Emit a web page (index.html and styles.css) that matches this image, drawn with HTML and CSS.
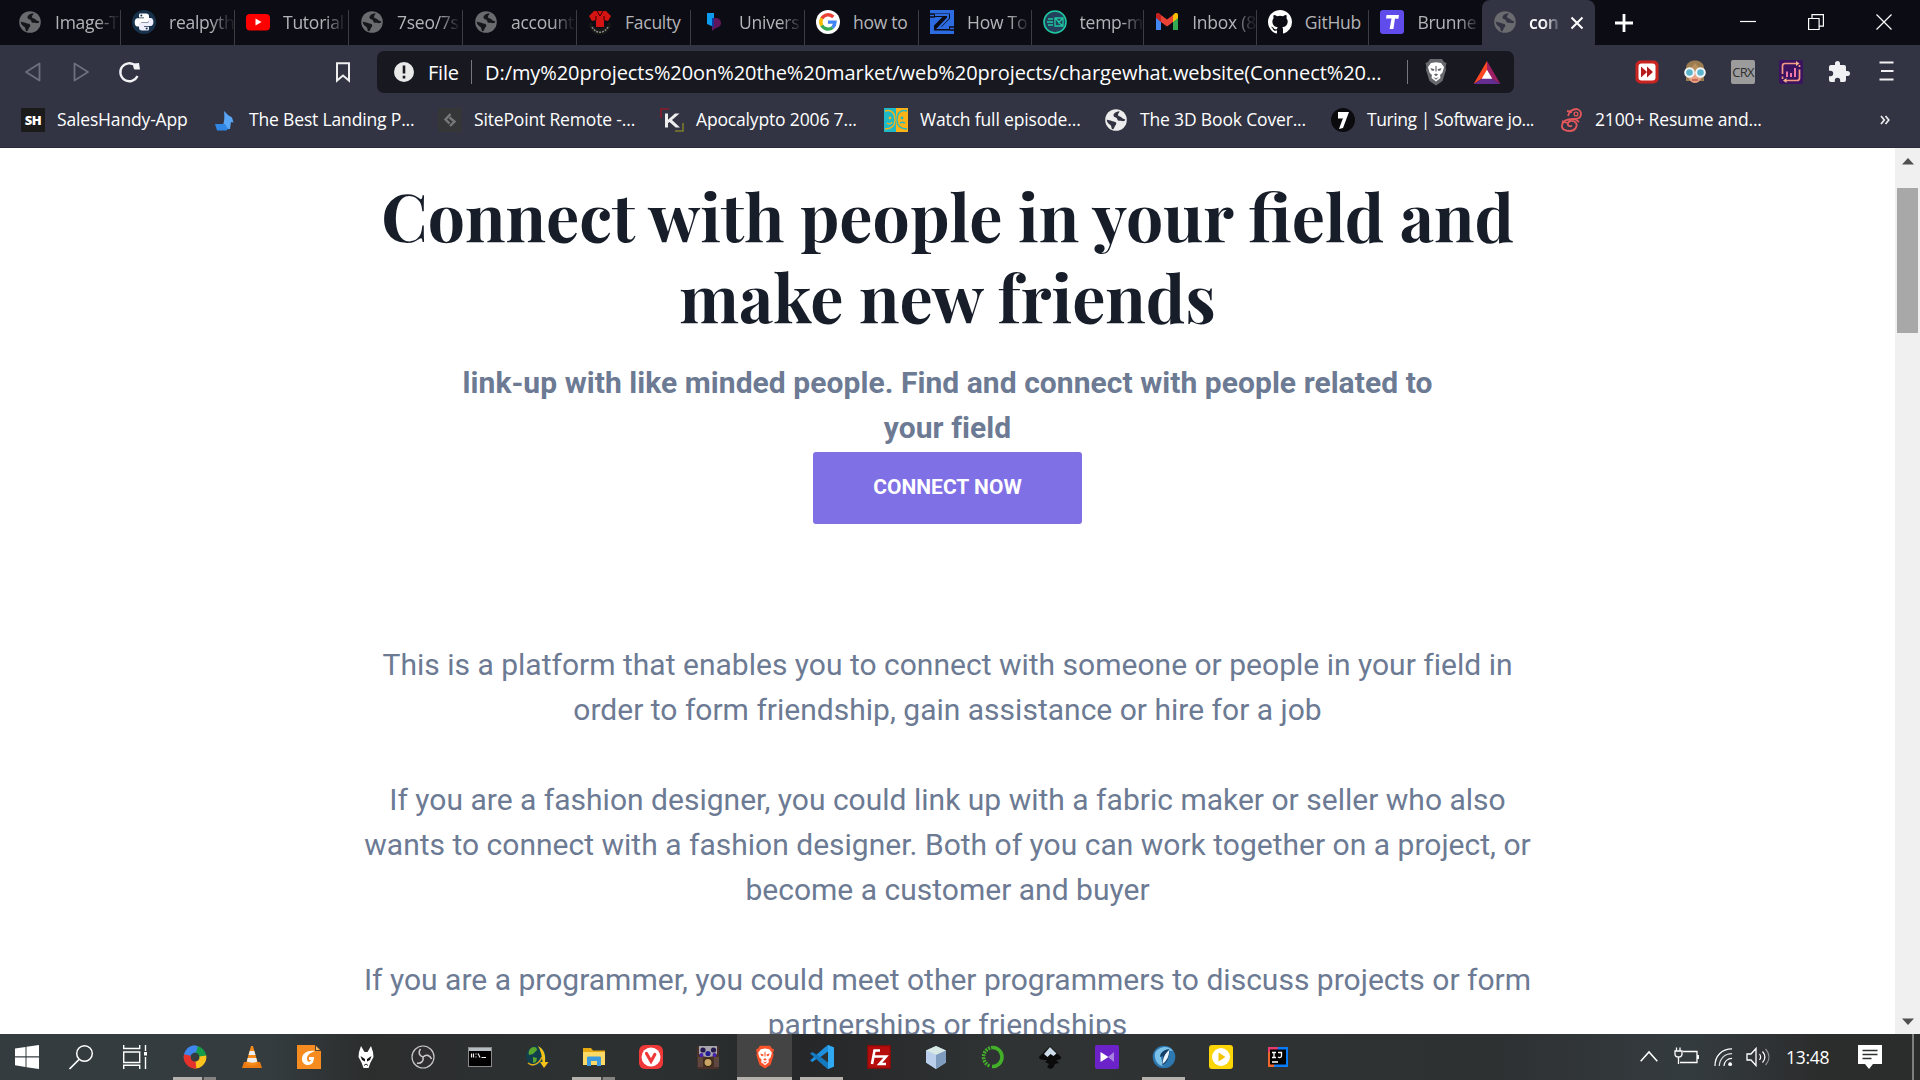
FILE: index.html
```html
<!DOCTYPE html>
<html lang="en">
<head>
<meta charset="utf-8">
<title>connect</title>
<link rel="stylesheet" href="styles.css">
</head>
<body>
<svg class="defs" aria-hidden="true">
  <symbol id="globe" viewBox="0 0 24 24"><circle cx="12" cy="12" r="10.800" fill="currentColor"/><path d="M15.500 3.200c-2 .3-4.500 1-5.500 2.500-1 1.300-.5 3 1 3.500 1.500.5 2 .8 2.300 2 .3 1.300 1.500 1.800 3 1.500 1.500-.2 2.200.8 3.700.3.700-.2 1.200-.8 1.300-1.500l-2-.8c-1.300-.5-2-2-3.300-2.300-1-.2-2-.5-2-1.700 0-1.300 1.500-2 1.500-3.500z" fill="var(--hole)"/><path d="M2.800 11.500c1.500 1 3.500.8 5 1.500s2 .3 3.500 1c1.200.6 1.300 2 .4 3.100-1 1-1 2.400-2.200 3.900-.6.5-1.500.2-1.800-.5-.5-1.200-.2-2.200-1-3.200-1.500-1.300-3.800-2.300-3.900-5.800z" fill="var(--hole)"/></symbol>
  <symbol id="lion" viewBox="0 0 24 28"><path d="M6 1h12l2 3 2.500 1-1 4 .5 3-3.500 11L12 27.500 5.500 23 2 12l.5-3-1-4L4 4z"/><path d="M7 5l5-.8L17 5l3 4-1.500 5.500L16 17l.5 3-4.500 3.500L7.500 20l.5-3-2.500-2.500L4 9z" fill="#fff"/><path d="M6.500 10l4 1.200-1 1.800-2-.6zM17.500 10l-4 1.200 1 1.800 2-.6zM9.800 16.500L12 15.600l2.200.9-2.200 1.800zM11.400 8h1.200v5.500h-1.200zM9 19l3 1.200L15 19l-3 2.800z"/></symbol>
</svg>

<header class="browser">
  <div class="tabstrip">
    <div class="tabs">
      <div class="tab"><svg class="ico dim"><use href="#globe"/></svg><span>Image-T</span></div>
      <div class="tab"><svg class="ico" viewBox="0 0 24 24"><circle cx="12" cy="12" r="12" fill="#17324a"/><path d="M8 3.500h6c2 0 3 1 3 2.700V10c0 1.600-1 2.600-2.600 2.600H10c-1.500 0-2.500 1-2.500 2.500v1.500H5.500c-2 0-2.800-2-2.800-4.300S3.600 8.300 5.500 8.300H12V7.500H7V5.200c0-1 .3-1.500 1-1.700z" fill="#fff"/><path d="M16 20.500h-6c-2 0-3-1-3-2.700V15c0-1.600 1-2 2.600-2h4.600c1.700 0 2.800-1 2.800-2.600V8h1.600c2 0 2.800 2 2.800 4s-.9 4-2.800 4H12v.8h5v2c0 1-.3 1.500-1 1.700z" fill="#eef"/><circle cx="9.300" cy="5.500" r="1" fill="#17324a"/><circle cx="14.700" cy="18.500" r="1" fill="#17324a"/></svg><span>realpyth</span></div>
      <div class="tab"><svg class="ico" viewBox="0 0 24 24"><rect y="4" width="24" height="16.500" rx="4" fill="#f00"/><path d="M9.500 8.500v7l6-3.500z" fill="#fff"/></svg><span>Tutorial</span></div>
      <div class="tab"><svg class="ico dim"><use href="#globe"/></svg><span>7seo/7s</span></div>
      <div class="tab"><svg class="ico dim"><use href="#globe"/></svg><span>account</span></div>
      <div class="tab fit"><svg class="ico" viewBox="0 0 24 24"><path d="M3 12a9.500 9.500 0 0 0 18 0l2 2a11 11 0 0 1-22 0z" fill="#181818"/><path d="M4 17c4 7 12 7 16 0" fill="none" stroke="#888" stroke-width="1.500" stroke-dasharray="2 1"/><path d="M1 6l5-5h12l5 5-3 5-4-1v7H8v-7l-4 1z" fill="#d31412"/><path d="M9 1l3 5 3-5M8 10V6m8 4V6" fill="none" stroke="#300" stroke-width="1"/></svg><span>Faculty</span></div>
      <div class="tab"><svg class="ico" viewBox="0 0 24 24"><path d="M5 3h7v14L5 14z" fill="#0d9bef"/><path d="M12 8h2a5 5 0 0 1 0 10l-4 3V9z" fill="#60155b"/><path d="M10 8h2v10l-2-2z" fill="#123a9a"/></svg><span>Univers</span></div>
      <div class="tab fit"><svg class="ico" viewBox="0 0 24 24"><circle cx="12" cy="12" r="12" fill="#fff"/><g fill="none" stroke-width="3.400"><path d="M17.300 7A7.200 7.200 0 0 0 5.800 8.500" stroke="#ea4335"/><path d="M5.800 8.400a7.200 7.200 0 0 0 0 7.200" stroke="#fbbc05"/><path d="M5.800 15.500a7.200 7.200 0 0 0 10.800 2" stroke="#34a853"/><path d="M16.500 17.500a7.200 7.200 0 0 0 2.500-5.400H12" stroke="#4285f4"/></g></svg><span>how to</span></div>
      <div class="tab"><svg class="ico" viewBox="0 0 24 24"><rect width="24" height="24" fill="#2d6be0"/><path d="M0 4h4M0 7h5M20 20h4M19 17h5" stroke="#0c0c14" stroke-width="1.500"/><path d="M4 3.500h16v5L11.500 17H20v3.500H4v-5L12.500 7H4z" fill="#0c0c14"/><path d="M5 5h13v3l-9.500 10H19" fill="none" stroke="#2d6be0" stroke-width="2"/></svg><span>How To</span></div>
      <div class="tab"><svg class="ico" viewBox="0 0 24 24"><circle cx="12" cy="12" r="11" fill="#23415c" stroke="#1fc8a0" stroke-width="1.600"/><path d="M5 9h5M4 12h6M5 15h5M12 8v8h8V8zm0 0l4 4 4-4m-5 4l5 4" fill="none" stroke="#1fc8a0" stroke-width="1.300"/></svg><span>temp-m</span></div>
      <div class="tab"><svg class="ico" viewBox="0 0 24 24"><path d="M1 6v14h5V9z" fill="#4285f4"/><path d="M18 9v11h5V6z" fill="#34a853"/><path d="M18 5v7l5-4V5c0-2-2-2.500-3.500-1.500z" fill="#fbbc04"/><path d="M1 5v3l5 4V5L4.500 3.500C3 2.500 1 3 1 5z" fill="#c5221f"/><path d="M6 5v7l6 4.500 6-4.500V5l-6 4.500z" fill="#ea4335"/></svg><span>Inbox (8</span></div>
      <div class="tab fit"><svg class="ico" viewBox="0 0 16 16"><path fill="#fff" d="M8 0C3.580 0 0 3.580 0 8c0 3.540 2.290 6.530 5.470 7.590.4.070.55-.17.55-.38 0-.19-.01-.82-.01-1.490-2.010.37-2.530-.49-2.690-.94-.09-.23-.48-.94-.82-1.130-.28-.15-.68-.52-.01-.53.630-.01 1.080.58 1.230.82.720 1.210 1.870.87 2.330.66.070-.52.280-.87.510-1.070-1.780-.2-3.640-.89-3.640-3.950 0-.87.310-1.590.82-2.150-.08-.2-.36-1.020.08-2.120 0 0 .67-.21 2.200.82a7.500 7.500 0 0 1 4 0c1.530-1.040 2.200-.82 2.200-.82.44 1.100.16 1.920.08 2.120.51.560.82 1.270.82 2.150 0 3.070-1.870 3.750-3.650 3.950.29.250.54.730.54 1.480 0 1.070-.01 1.930-.01 2.200 0 .21.150.46.550.38A8.010 8.010 0 0 0 16 8c0-4.420-3.580-8-8-8z"/></svg><span>GitHub</span></div>
      <div class="tab last"><svg class="ico" viewBox="0 0 24 24"><rect width="24" height="24" rx="3" fill="#5f4cea"/><path d="M6.500 5H19l-.7 4-3.300-.6L13.400 19H9.600l1.900-10.500H6z" fill="#fff"/></svg><span>Brunne</span></div>
      <div class="tab active"><svg class="ico dim"><use href="#globe"/></svg><span>con</span><svg class="x" viewBox="0 0 14 14"><path d="M1.500 1.500l11 11m0-11l-11 11" stroke="#fff" stroke-width="2"/></svg></div>
    </div>
    <svg class="plus" viewBox="0 0 18 18"><path d="M9 0v18M0 9h18" stroke="#fff" stroke-width="2.800"/></svg>
    <div class="winctl">
      <svg viewBox="0 0 16 16"><path d="M0 7.500h16" stroke="#fff" stroke-width="1.200"/></svg>
      <svg viewBox="0 0 16 16"><path d="M.6 4.500h10.500v11H.6zM4 4.500V.6h11.400v11.500H11" fill="none" stroke="#fff" stroke-width="1.200"/></svg>
      <svg viewBox="0 0 16 16"><path d="M.5.5l15 15m0-15l-15 15" stroke="#fff" stroke-width="1.200"/></svg>
    </div>
  </div>

  <div class="toolbar">
    <svg class="nav back" viewBox="0 0 18 20"><path d="M15.500 1.500v17L2 10z" fill="none" stroke="#6d6f7b" stroke-width="1.800" stroke-linejoin="round"/></svg>
    <svg class="nav fwd" viewBox="0 0 18 20"><path d="M2.500 1.500v17L16 10z" fill="none" stroke="#6d6f7b" stroke-width="1.800" stroke-linejoin="round"/></svg>
    <svg class="reload" viewBox="0 0 22 22"><path d="M18.500 15a9 9 0 1 1-2.200-10.500" fill="none" stroke="#f2f2f4" stroke-width="2.300"/><path d="M14.500 2.500l5.500-.5 1 6.500h-5.500c-1.500-2-1.500-4-1-6z" fill="#f2f2f4"/></svg>
    <svg class="mark" viewBox="0 0 16 20"><path d="M2 1.200h12v17.300l-6-5-6 5z" fill="none" stroke="#eee" stroke-width="2"/></svg>
    <div class="address">
      <svg class="info" viewBox="0 0 20 20"><circle cx="10" cy="10" r="10" fill="#e9e9ea"/><path d="M10 3.500v8M10 13.800v2.600" stroke="#181920" stroke-width="2.600"/></svg>
      <span class="file">File</span><i class="bar"></i>
      <span class="url">D:/my%20projects%20on%20the%20market/web%20projects/chargewhat.website(Connect%20...</span><i class="bar b2"></i>
      <svg class="shield" fill="#68696e"><use href="#lion"/></svg>
      <svg class="bat" viewBox="0 0 28 24"><path d="M14 0L0 24l14-9z" fill="#ff4724"/><path d="M14 0l14 24-14-9z" fill="#9e1f63"/><path d="M0 24h28l-14-9z" fill="#662d91"/><path d="M14 9l-5.500 9.500h11z" fill="#fff"/></svg>
    </div>
    <div class="exts">
      <svg viewBox="0 0 24 24"><rect x=".5" y=".5" width="23" height="23" rx="5" fill="#cb2320"/><rect x="3.500" y="3.500" width="17" height="17" rx="3" fill="#fff"/><path d="M6 6.500l6 5.500-6 5.500zM12 6.500l6 5.500-6 5.500z" fill="#b71c1c"/></svg>
      <svg viewBox="0 0 24 24"><path d="M3 21V8c0-10 18-10 18 0v13z" fill="#9b7b50"/><path d="M4 11h16c0 6-3 12-8 12S4 17 4 11z" fill="#e8a383"/><path d="M9 20h6" stroke="#a33" stroke-width="1"/><path d="M4 9c4-1 6-3 8-6 2 3 4 5 8 6v3H4z" fill="#b8915e"/><circle cx="6.500" cy="12.500" r="4.300" fill="#5bb4cc" stroke="#f3f6f8" stroke-width="2"/><circle cx="17.500" cy="12.500" r="4.300" fill="#5bb4cc" stroke="#f3f6f8" stroke-width="2"/></svg>
      <div class="crx">CRX</div>
      <svg viewBox="0 0 24 24"><rect width="24" height="24" rx="2" fill="#3c1361"/><path d="M3.500 14V6c0-1.700.8-2.500 2.500-2.500h12M20.500 9.500V18c0 1.700-.8 2.500-2.500 2.500H6M20.500 7V5M3.500 16.500V19" fill="none" stroke="#f49a83" stroke-width="1.700"/><path d="M17 1l3.500 2.500L17 6M7.500 18L4 20.500 7.500 23" fill="#f7b38a"/><path d="M8 11.500V17m4-4v4m4-9v9" stroke="#f07aa5" stroke-width="2"/></svg>
      <svg viewBox="0 0 24 24"><path d="M20.500 11H19V7a2 2 0 0 0-2-2h-4V3.500a2.500 2.500 0 0 0-5 0V5H4a2 2 0 0 0-2 2v3.800h1.500a2.700 2.700 0 0 1 0 5.400H2V20a2 2 0 0 0 2 2h3.800v-1.500a2.700 2.700 0 0 1 5.400 0V22H17a2 2 0 0 0 2-2v-4h1.500a2.500 2.500 0 0 0 0-5z" fill="#f1f1f3"/></svg>
      <svg viewBox="0 0 24 24"><path d="M4.500 2.500h14M6 11h12.500M4.500 19.500h14" stroke="#f1f1f3" stroke-width="2"/></svg>
    </div>
  </div>

  <div class="bookmarks">
    <div class="bm"><div class="sh">SH</div><span>SalesHandy-App</span></div>
    <div class="bm"><svg viewBox="0 0 24 24"><path d="M11 3l4 4 4 2.500 1.500 5-2.500-.5-1 7H7c4-4 5-9 4-18z" fill="#58a6f5"/><path d="M2 16h10l3 5-1.500 1.500H4z" fill="#2f86e4"/></svg><span>The Best Landing P...</span></div>
    <div class="bm"><svg viewBox="0 0 24 24"><rect width="24" height="24" fill="#353638"/><path d="M12.500 6l-5 5.500 4 4M11.500 9.500l5 4-4.500 4.500" fill="none" stroke="#77787a" stroke-width="2.400"/></svg><span>SitePoint Remote -...</span></div>
    <div class="bm"><svg viewBox="0 0 24 24"><path d="M1 10V1h8" fill="none" stroke="#8c1b2b" stroke-width="1.600"/><path d="M15 23h8v-8" fill="none" stroke="#7c7b2b" stroke-width="1.600"/><path d="M5 5.500h3v6.300l7-6.300h4.500l-7.500 6.500 8 7.500h-4.300L9.500 14 8 15.300v4.200H5z" fill="#eee"/></svg><span>Apocalypto 2006 7...</span></div>
    <div class="bm"><svg viewBox="0 0 24 24"><path fill="#20b9c6" d="M0 0h12v24H0z"/><path fill="#fbb317" d="M12 0h12v24H12z"/><path d="M1 3c6-2 10 2 10 9s-4 9-10 9M3 15c2 1.500 4 1 5-1" fill="none" stroke="#fbb317" stroke-width="1.400"/><path d="M23 3c-6-2-10 2-10 9s4 9 10 9M16 15c2-1.500 3-1 5 0" fill="none" stroke="#20b9c6" stroke-width="1.400"/><circle cx="6" cy="10" r="1.400" fill="#fbb317"/><circle cx="18" cy="10" r="1.400" fill="#20b9c6"/></svg><span>Watch full episode...</span></div>
    <div class="bm"><svg class="light"><use href="#globe"/></svg><span>The 3D Book Cover...</span></div>
    <div class="bm pipe"><svg viewBox="0 0 24 24"><circle cx="12" cy="12" r="12" fill="#0b0b0d"/><path d="M7 4h11l-1.500 4L12 20l-4 1 4-11H7zM7 9h5l-.5 1.500H7z" fill="#fff"/></svg><span>Turing | Software jo...</span></div>
    <div class="bm"><svg viewBox="0 0 24 24"><path d="M9 8c1-4 4-7 9-7 4 1 5 5 3 8-1 2-4 2-7 2-6 0-10 1-11 6-1 4 3 6 8 6s8-5 6-8-7-3-8 0 2 4 4 2.500M8 3l5 1M16 11l4 3M3 13l5 2" fill="none" stroke="#e4585c" stroke-width="1.800"/><circle cx="17" cy="6" r="1.900" fill="none" stroke="#e4585c" stroke-width="1.300"/></svg><span>2100+ Resume and...</span></div>
    <svg class="more" viewBox="0 0 10 10"><path d="M1 1l3.300 4L1 9M5.500 1l3.300 4-3.300 4" fill="none" stroke="#eee" stroke-width="1.700"/></svg>
  </div>
</header>

<div class="viewport">
  <main class="page">
    <h1>Connect with people in your field and<br>make new friends</h1>
    <h2>link-up with like minded people. Find and connect with people related to<br>your field</h2>
    <a class="cta">CONNECT NOW</a>
    <div class="copy">
      <p>This is a platform that enables you to connect with someone or people in your field in<br>order to form friendship, gain assistance or hire for a job</p>
      <p>If you are a fashion designer, you could link up with a fabric maker or seller who also<br>wants to connect with a fashion designer. Both of you can work together on a project, or<br>become a customer and buyer</p>
      <p>If you are a programmer, you could meet other programmers to discuss projects or form<br>partnerships or friendships</p>
    </div>
  </main>
  <div class="scroll">
    <svg viewBox="0 0 12 7"><path d="M6 0l6 6.500H0z" fill="#505050"/></svg>
    <div class="thumb"></div>
    <svg class="down" viewBox="0 0 12 7"><path d="M6 7L0 .5h12z" fill="#505050"/></svg>
  </div>
</div>

<footer class="taskbar">
  <div class="sys"><svg viewBox="0 0 24 24"><path d="M0 3.500L10.500 2v9.300H0zM11.500 1.800L24 0v11.300H11.500zM0 12.500h10.500V22L0 20.300zM11.500 12.500H24V24l-12.500-1.800z" fill="#fff"/></svg></div>
  <div class="sys"><svg viewBox="0 0 24 24"><circle cx="15.500" cy="8.500" r="7.800" fill="none" stroke="#fff" stroke-width="1.500"/><path d="M10 14.500L.5 24" stroke="#fff" stroke-width="1.700"/></svg></div>
  <div class="sys"><svg viewBox="0 0 24 24"><path d="M.7 0v3.500h16V0M.7 7h16v10.500H.7zM.7 24v-3.800h16V24M22.500 0v6M22.500 12v12" fill="none" stroke="#fff" stroke-width="1.400"/><path d="M21 7h3v3.500h-3z" fill="#fff"/></svg></div>
  <div class="apps">
    <div class="app open2"><svg viewBox="0 0 24 24"><g fill="none" stroke-width="6.800"><path d="M4.200 13A8 8 0 0 1 12 4" stroke="#3f86ee"/><path d="M11 4.100a8 8 0 0 1 8.500 10" stroke="#169b48"/><path d="M19.900 11a8 8 0 0 1-8.600 9" stroke="#fcc31e"/><path d="M13 20a8 8 0 0 1-8.600-10" stroke="#e5322c"/><path d="M6 6.600A8 8 0 0 1 14 4.200" stroke="#3f86ee"/></g></svg></div>
    <div class="app"><svg viewBox="0 0 24 24"><path d="M4 17h16l2 6H2z" fill="#ec7a12"/><path d="M11 1h2l5 18c-3 2-9 2-12 0z" fill="#f58b1b"/><path d="M9.700 6h4.600l1.200 4h-7zM7.700 13h8.600l1 3.500c-3 1.500-7 1.500-10.500 0z" fill="#eee"/></svg></div>
    <div class="app"><svg viewBox="0 0 24 24"><path d="M0 0h18l6 6v18H0z" fill="#f68c1f"/><path d="M18.500 0v5.500H24z" fill="#ffb75f" stroke="#2d2f2f" stroke-width=".8"/><path d="M18 6c-7-1-13 2-13 8 0 4 3 6 6 6 4 0 6-3 6-8h-5v3h2c-1 3-4 2-4-1 0-4 3-6 8-8z" fill="#fff"/></svg></div>
    <div class="app"><svg viewBox="0 0 24 24"><path d="M7 1l3.500 6h3L17 1l2 6 .5 5-3 5.500-2 5.500h-5l-2-5.500-3-5.500L5 7z" fill="#fff"/><path d="M6.500 11l4.500 3v2.500l-3-1.500zM17.500 11L13 14v2.500l3-1.500z" fill="#111"/><path d="M10 20.500l2-1.500 2 1.500" stroke="#222" fill="none"/></svg></div>
    <div class="app"><svg viewBox="0 0 24 24"><circle cx="12" cy="12" r="11" fill="#302e31" stroke="#c9c9ca" stroke-width="1.200"/><g fill="none" stroke="#c9c9ca" stroke-width="1.600"><path d="M12 12c-4-1-5-5-2.500-8"/><path d="M12 12c3-3 7-2 8.500 2"/><path d="M12 12c1 4-2 7-6 6"/></g></svg></div>
    <div class="app"><svg viewBox="0 0 24 24"><rect x=".5" y="2.500" width="23" height="19" fill="#000" stroke="#8a8a8a"/><path d="M1 3h22v3H1z" fill="#b7bcc0"/><path d="M3.500 8.500v4m2-4v4m2.500-4v1m0 2v1m2-4l2 4m1.500 0h4.500" stroke="#eee" stroke-width="1.200"/></svg></div>
    <div class="app"><svg viewBox="0 0 24 24"><circle cx="11" cy="11" r="10" fill="#123f4e"/><path d="M6 3c3-2 6-1 6 2l-4 4-4 1c-1-3 0-5 2-7zM8 12l4 1-1 4-3 1z" fill="#5aa72e"/><path d="M13 1c6 3 8 9 7 16h3.500L19 23l-4-6h2.500C17 11 16 6 13 1z" fill="#f4c21b"/><path d="M3 18c5 4 11 1 14-6" stroke="#e0ad1d" stroke-width="1.600" fill="none"/></svg></div>
    <div class="app open2"><svg viewBox="0 0 24 24"><path d="M1 3h8l2 2.500h12V20H1z" fill="#e9a912"/><path d="M1 7h22v13H1z" fill="#ffd966"/><path d="M5 13c0-1 .5-1.500 1.500-1.500h11c1 0 1.500.5 1.500 1.500v8h-4v-5H9v5H5z" fill="#3c9be0"/></svg></div>
    <div class="app"><svg viewBox="0 0 24 24"><rect width="24" height="24" rx="6" fill="#ef3939"/><circle cx="12" cy="12" r="9.500" fill="#fff"/><path d="M7.500 8.500l4.500 7.700 3.800-6.700" fill="none" stroke="#ef3939" stroke-width="3.200" stroke-linecap="round"/></svg></div>
    <div class="app"><svg viewBox="0 0 24 24"><rect x="1" y="1" width="22" height="23" rx="2" fill="#4a3029"/><path d="M2 12h5v10H2zM18 12h5v10h-5z" fill="#5f463e"/><path d="M3 1h18v8c-5 4-13 4-18 0z" fill="#a9a5ac"/><circle cx="7" cy="5" r="2.600" fill="#241a4d"/><circle cx="12" cy="8.500" r="2.600" fill="#231d92"/><circle cx="17.500" cy="5" r="2.600" fill="#241a4d"/><circle cx="5.500" cy="10" r="2" fill="#4423b0"/><circle cx="18.500" cy="10" r="2" fill="#4423b0"/><circle cx="12" cy="17.500" r="4.200" fill="#c9a566" stroke="#3a2a18" stroke-width="1.500"/></svg></div>
    <div class="app current"><svg fill="#fb542b"><use href="#lion"/></svg></div>
    <div class="app open"><svg viewBox="0 0 24 24"><path d="M18 0l6 2.500v19L18 24 7 13.500 2.500 17 0 15.500 14 3z" fill="#1d8fdc"/><path d="M2.500 7L0 8.500 14 21l4 3V17z" fill="#1579c0"/><path d="M18 0l6 2.500v19L18 24z" fill="#31a8f2"/><path d="M18 6.500v11L10.500 12z" fill="#2d3031"/></svg></div>
    <div class="app"><svg viewBox="0 0 24 24"><rect x=".7" y=".7" width="22.600" height="22.600" fill="#b60c0c" stroke="#8e0808" stroke-width="1.400" stroke-dasharray="2 1"/><path d="M13 5.500H7.500L5 19M6 11.500h5.500M11.500 11.500H19L12.500 19H19" fill="none" stroke="#fff" stroke-width="2.600"/></svg></div>
    <div class="app"><svg viewBox="0 0 24 24"><path d="M12 1l10 4.500v12L12 24 2 17.500v-12z" fill="#a9c4dc"/><path d="M2 5.500L12 1l10 4.500L12 10z" fill="#d8e8e4"/><path d="M2 5.500L12 10v14L2 17.500z" fill="#b9cfec"/><path d="M22 5.500L12 10v14l10-6.500z" fill="#7e9cbe"/></svg></div>
    <div class="app"><svg viewBox="0 0 24 24"><path d="M12 2.500a9.500 9.500 0 1 1-1 19" fill="none" stroke="#43b02a" stroke-width="3.600"/><path d="M12 2.500a9.500 9.500 0 0 0-3 18.500" fill="none" stroke="#43b02a" stroke-width="3.600" stroke-dasharray="2 1"/></svg></div>
    <div class="app"><svg viewBox="0 0 24 24"><path d="M12 1l11 11c1 2-2 3-5 3l3 3-4 1-2 4-3 1-3-2 2-3-4-2 2-2c-4 0-8 0-8-3z" fill="#0b0b0c"/><path d="M12 2l6.500 6.500-3 2.500-3-2-3 3L6 9z" fill="#cfdceb"/></svg></div>
    <div class="app"><svg viewBox="0 0 24 24"><rect width="24" height="24" rx="2" fill="#6b22c9"/><path d="M5.500 7l8 5-8 5z" fill="#fff"/><path d="M19 7l-6 5 6 5z" fill="#a880e0"/></svg></div>
    <div class="app open"><svg viewBox="0 0 24 24"><circle cx="12" cy="12" r="11.300" fill="#2e78b1"/><path d="M3 8C7 1 17 0 21 6c-7-1-12 1-12 6l2 9C5 20 2 14 3 8z" fill="#7cc1e8"/><path d="M17 4c-6 1-9 4-9 8l3-1-1 9c5-1 8-8 7-16z" fill="#153f69"/><path d="M17 5c-4 4-6 7-6.500 14 4-3 7-8 6.500-14z" fill="#eaf4fb"/></svg></div>
    <div class="app"><svg viewBox="0 0 24 24"><rect width="24" height="24" rx="3" fill="#fbd505"/><circle cx="12" cy="12" r="9" fill="#fff"/><path d="M9.500 7.500l7 4.500-7 4.500z" fill="#f2c500"/></svg></div>
    <div class="app"><svg viewBox="0 0 24 24"><path d="M2 2h11v20H2z" fill="#f0662c"/><path d="M2 2h12v5H2z" fill="#e73a6d"/><path d="M12 2h10v20H8z" fill="#087cfa"/><rect x="4" y="4.500" width="16" height="15" fill="#000"/><path d="M6 7.500h4M8 7.500v5M6 12.500h4M12 7.500h3.500v3.500c0 1.500-2 2-3.500 1M6 17h6" stroke="#fff" stroke-width="1.300" fill="none"/></svg></div>
  </div>
  <div class="tray">
    <svg class="chev" viewBox="0 0 18 11"><path d="M.7 10.300L9 1l8.300 9.300" fill="none" stroke="#fff" stroke-width="1.500"/></svg>
    <svg class="batt" viewBox="0 0 25 18"><path d="M9 4.500h14v11H6M24.300 8v4M1 4h7v3c0 2-1 3-3.500 3S1 9 1 7zM2.500 4V.5M6 4V.5M4.500 10v7" fill="none" stroke="#fff" stroke-width="1.300"/></svg>
    <svg class="wifi" viewBox="0 0 20 20"><g fill="none" stroke="#fff" stroke-width="1.300"><path d="M1 19.500C1 9 8 1.500 19 1.500"/><path d="M5.500 19.500C6 12 11 6.500 19 6.500" stroke="#ddd"/><path d="M10.500 19.500c.5-5 4-8 8.500-8"/></g><circle cx="17" cy="17.500" r="2" fill="#fff"/></svg>
    <svg class="vol" viewBox="0 0 24 20"><path d="M1 7h4l5-5.500v17L5 13H1z" fill="none" stroke="#fff" stroke-width="1.300"/><path d="M13.500 7c1.500 2 1.500 4 0 6M16.500 4.500c3 3.500 3 7.500 0 11" fill="none" stroke="#fff" stroke-width="1.200"/><path d="M19.500 2c4.500 5 4.500 11 0 16" fill="none" stroke="#8b8d8e" stroke-width="1.200"/></svg>
    <span class="clock">13:48</span>
    <svg class="note" viewBox="0 0 24 24"><path d="M0 0h24v19H15l-4 5-4-5H0z" fill="#fff"/><path d="M4.500 5.500h15M4.500 9.500h15M4.500 13.500h9" stroke="#2d3031" stroke-width="1.300"/></svg>
    <i class="peek"></i>
  </div>
</footer>
</body>
</html>
```
FILE: styles.css
```css
* { box-sizing: border-box; }
html, body { margin: 0; height: 100%; overflow: hidden; }
body {
  display: flex;
  flex-direction: column;
  width: 1920px;
  height: 1080px;
  background: #fff;
  font-family: "Open Sans", "Noto Sans", sans-serif;
}
svg { display: block; flex: none; overflow: visible; }
.defs { position: absolute; width: 0; height: 0; }

/* browser chrome */
.browser { height: 148px; flex: none; background: #323443; border-bottom: 1px solid #292b38; color: #fff; }
.tabstrip { display: flex; align-items: center; height: 45px; padding-left: 7px; background: #0c0c14; }
.tabs { display: grid; grid-template-columns: repeat(8, 114px) repeat(5, 112.600px) 113px; height: 45px; flex: none; }
.tab { position: relative; display: flex; align-items: center; padding: 0 0 2px 11px; gap: 13px; font-size: 17.500px; letter-spacing: -.25px; color: #b4b4b8; }
.tab::after { content: ""; position: absolute; right: 0; top: 10px; bottom: 0; width: 1px; background: #3c3c41; }
.tab span { white-space: nowrap; mask-image: linear-gradient(90deg, #000 42px, rgba(0,0,0,.15) 60px); }
.tab.fit span { mask-image: none; }
.tab.last::after, .tab.active::after { display: none; }
.tab.active { background: #323443; border-radius: 8px 8px 0 0; color: #fff; font-weight: 600; gap: 12px; }
.tab.active span { width: 29px; mask-image: linear-gradient(90deg, #000 50%, rgba(0,0,0,.2)); }
.tab .x { width: 14px; height: 14px; margin-top: 2px; }
.ico { width: 24px; height: 24px; }
.dim { color: #6a6b6f; --hole: #16161d; }
.active .dim { --hole: #323443; }
.plus { width: 18px; height: 18px; margin-left: 20px; }
.winctl { display: flex; gap: 52px; margin-left: 107px; margin-top: -2px; }
.winctl svg { width: 16px; height: 16px; }

.toolbar { display: flex; align-items: center; height: 54px; padding-left: 24px; }
.nav { width: 18px; height: 20px; }
.fwd { margin-left: 30px; }
.reload { width: 22px; height: 22px; margin-left: 29px; }
.mark { width: 16px; height: 20px; margin-left: 194px; }
.address { display: flex; align-items: center; width: 1137px; height: 42px; margin-left: 26px; padding-left: 17px; border-radius: 7px; background: #181920; font-size: 20px; white-space: nowrap; }
.info { width: 20px; height: 20px; }
.file { width: 31px; margin-left: 14px; letter-spacing: -.2px; }
.bar { width: 1px; height: 24px; margin-left: 12px; background: #77787d; }
.url { width: 898px; margin-left: 13px; letter-spacing: -.07px; }
.b2 { margin-left: 24px; }
.shield { width: 24px; height: 28px; margin-left: 16px; }
.bat { width: 28px; height: 23px; margin-left: 25px; }
.exts { display: flex; gap: 24px; margin-left: 121px; }
.exts svg, .crx { width: 24px; height: 24px; }
.crx { flex: none; display: grid; place-items: center; border-radius: 2px; background: #9c9c9c; color: #2f2f2f; font-size: 13px; letter-spacing: -.8px; }

.bookmarks { display: grid; grid-template-columns: 192px 225px 222px 224px 220px 227px 228px 321px 10px; align-items: center; height: 42px; padding-left: 21px; font-size: 17.500px; letter-spacing: -.16px; }
.bm { display: flex; align-items: center; gap: 12px; white-space: nowrap; }
.bm span { margin-top: -2px; }
.pipe { letter-spacing: -.42px; }
.bm svg, .sh { width: 24px; height: 24px; flex: none; }
.sh { display: grid; place-items: center; background: #1b1b1b; font-size: 13px; font-weight: 800; letter-spacing: -.5px; }
.light { color: #ededee; --hole: #323443; }
.more { width: 10px; height: 10px; }

/* page */
.viewport { display: flex; flex: 1; min-height: 0; overflow: hidden; }
.page { flex: 1; display: flex; flex-direction: column; align-items: center; padding-top: 27px; text-align: center; white-space: nowrap; overflow: hidden; font-family: Roboto, sans-serif; font-size: 30px; line-height: 45px; letter-spacing: .01px; color: #6c7a93; }
h1 { margin: 0; font: bold 66px/81px "Playfair Display", "Liberation Serif", serif; letter-spacing: 0; color: #171e29; }
h2 { margin: 23px 0 0; font-size: 30px; line-height: 45px; font-weight: 700; letter-spacing: .05px; }
.cta { display: block; flex: none; width: 269px; height: 72px; margin-top: 2px; border-radius: 3px; background: #7f70e5; color: #fff; font-size: 21px; font-weight: 700; line-height: 70px; }
.copy { margin-top: 118px; }
.copy p { margin: 0 0 45px; }
.scroll { width: 25px; flex: none; display: flex; flex-direction: column; align-items: center; background: #f0f0f0; padding: 10px 0 9px; }
.scroll svg { width: 12px; height: 7px; }
.thumb { width: 21px; height: 145px; margin-top: 23px; background: #a8a8a8; }
.scroll .down { margin-top: auto; }

/* taskbar */
.taskbar { display: flex; align-items: stretch; flex: none; height: 46px; background: linear-gradient(90deg, #343c3f 0, #343c3f 14%, #2c2e2e 19%, #2d3131 30%, #2b2f2f 36%, #262728 42%, #2f3333 52%, #2e3132 78%, #343b3f 88%, #2b2c2c 95%); }
.sys { width: 54px; display: grid; place-items: center; }
.sys svg, .app svg { width: 24px; height: 24px; }
.apps { display: flex; margin-left: 4px; }
.app { position: relative; width: 55px; margin: 0 1px; display: grid; place-items: center; }
.current { background: #444444; }
.open::after, .open2::after, .current::after { content: ""; position: absolute; left: 6px; right: 6px; bottom: 0; height: 3px; background: #b5b2ae; }
.current::after { left: 0; right: 0; }
.open2::after { background: linear-gradient(90deg, #b5b2ae 29px, #4a4a4a 29px 31px, #868482 31px); }
.tray { display: flex; align-items: center; margin-left: auto; color: #fff; }
.chev { width: 18px; height: 11px; margin-top: -2px; }
.batt { width: 25px; height: 18px; margin-left: 16px; margin-top: -2px; }
.wifi { width: 19px; height: 20px; margin-left: 15px; }
.vol { width: 24px; height: 20px; margin-left: 13px; }
.clock { width: 43px; margin-left: 16px; font-size: 17.500px; letter-spacing: -.3px; white-space: nowrap; }
.note { width: 24px; height: 24px; margin-left: 29px; }
.peek { align-self: stretch; width: 2px; margin: 0 6px 0 30px; background: #7c7e7f; }
```
